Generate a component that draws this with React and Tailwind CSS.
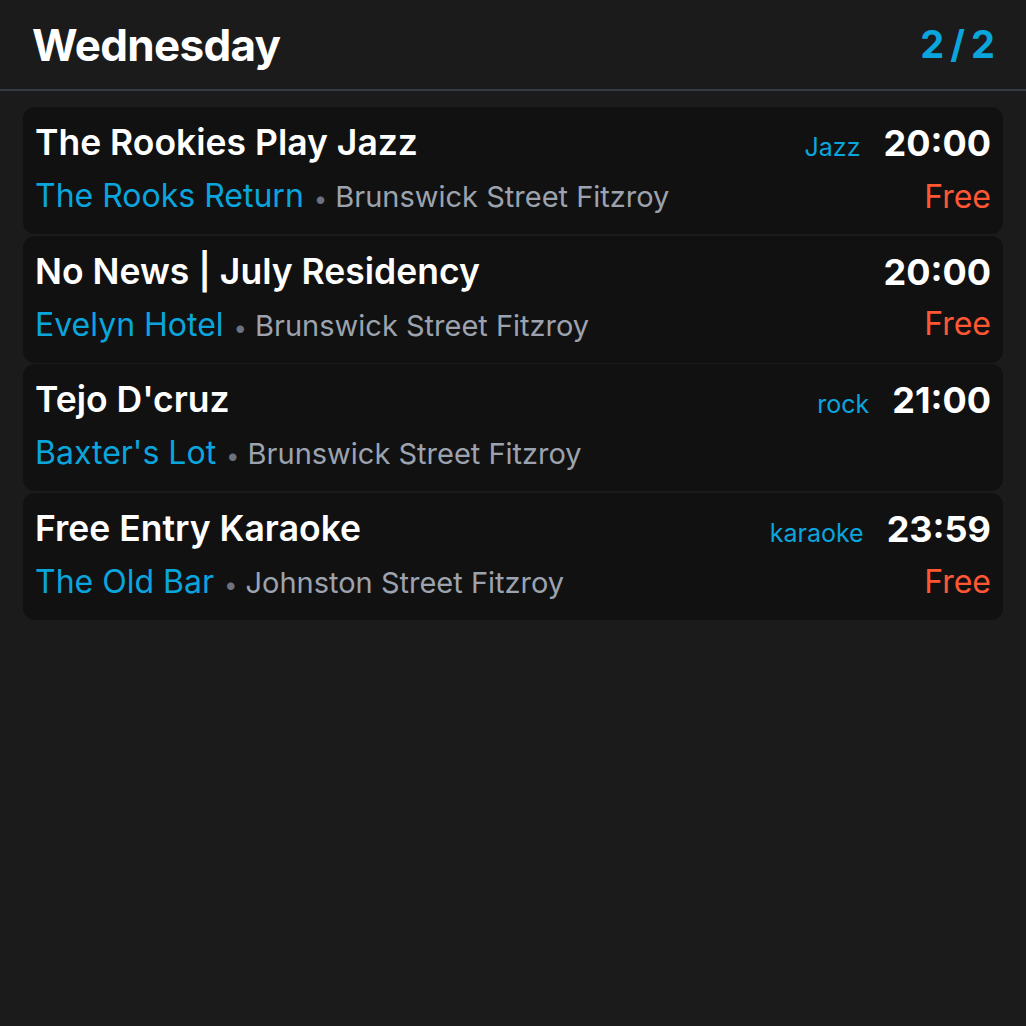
import React from 'react';

const events = [
  { title: 'The Rookies Play Jazz', venue: 'The Rooks Return', address: 'Brunswick Street Fitzroy', genre: 'Jazz', time: '20:00', free: true },
  { title: 'No News | July Residency', venue: 'Evelyn Hotel', address: 'Brunswick Street Fitzroy', genre: null, time: '20:00', free: true },
  { title: "Tejo D'cruz", venue: "Baxter's Lot", address: 'Brunswick Street Fitzroy', genre: 'rock', time: '21:00', free: false },
  { title: 'Free Entry Karaoke', venue: 'The Old Bar', address: 'Johnston Street Fitzroy', genre: 'karaoke', time: '23:59', free: true },
];

const EventCard = ({ event }) => (
  <div className="h-[127px] rounded-xl bg-[#111111] pl-3 pr-3 pt-[14px] flex justify-between">
    <div className="flex flex-col min-w-0">
      <div className="text-[35.5px] leading-[44px] font-semibold text-white truncate">{event.title}</div>
      <div className="mt-[10px] flex items-baseline whitespace-nowrap">
        <span className="text-[32px] leading-[40px] text-[#0aa5dd]">{event.venue}</span>
        <span className="text-[24px] text-[#6b7280] ml-[10px] mr-[8px]">•</span>
        <span className="text-[29px] text-[#9ca3af]">{event.address}</span>
      </div>
    </div>
    <div className="flex flex-col items-end shrink-0">
      <div className="flex items-baseline gap-[23px]">
        {event.genre && <span className="text-[25px] text-[#0aa5dd]">{event.genre}</span>}
        <span className="text-[36px] leading-[44px] font-bold text-white">{event.time}</span>
      </div>
      {event.free && (
        <div className="mt-[10px] text-[32px] leading-[40px] text-[#ff5733]">Free</div>
      )}
    </div>
  </div>
);

const App = () => {
  return (
    <div className="min-h-[1026px] bg-[#1b1b1b] font-['Inter',sans-serif]">
      <div className="h-[91px] flex items-center justify-between pl-[32px] pr-[31px] border-b-2 border-[#363b45]">
        <h1 className="text-[44px] font-bold text-white tracking-[-0.7px]">Wednesday</h1>
        <span className="flex items-center gap-[6px] text-[38px] font-bold text-[#0aa5dd]">
          <span>2</span>
          <span>/</span>
          <span>2</span>
        </span>
      </div>
      <div className="px-[23px] pt-[16px] flex flex-col gap-[1.5px]">
        {events.map((event, i) => (
          <EventCard key={i} event={event} />
        ))}
      </div>
    </div>
  );
};

export default App;
